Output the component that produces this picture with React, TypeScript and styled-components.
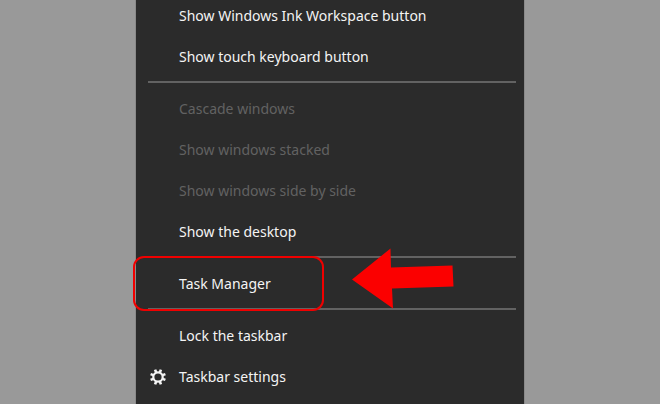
import React from "react";
import styled, { createGlobalStyle } from "styled-components";

const GlobalStyle = createGlobalStyle`
  * { box-sizing: border-box; }
  body {
    margin: 0;
    background: #999999;
    font-family: "Noto Sans", "Open Sans", sans-serif;
  }
`;

const Page = styled.main`
  display: flex;
  justify-content: center;
  min-height: 100vh;
  overflow: hidden;
`;

const Menu = styled.ul`
  flex: 0 1 388px;
  margin: -5px 0 0;
  padding: 0 0 7px;
  list-style: none;
  background: #2b2b2b;
  box-shadow: 0 0 0 1px #8a8a8a;
`;

const Item = styled.li`
  position: relative;
`;

const Command = styled.button`
  display: grid;
  grid-template-columns: 43px 1fr;
  align-items: center;
  width: 100%;
  height: 41px;
  padding: 0;
  border: 0;
  background: transparent;
  color: #f4f4f4;
  font: inherit;
  font-size: 14px;
  line-height: 20px;
  text-align: left;
  white-space: nowrap;

  &:disabled {
    color: #626262;
  }
`;

const IconSlot = styled.span`
  display: flex;
  justify-content: flex-end;
  padding-right: 13px;
`;

const Separator = styled.li`
  height: 11px;
  padding: 4px 8px 0 12px;

  &::before {
    content: "";
    display: block;
    height: 2px;
    background: #626262;
  }
`;

const Highlight = styled.span`
  position: absolute;
  top: -7px;
  left: -3px;
  width: 191px;
  height: 55px;
  border: 2px solid #f00000;
  border-radius: 11px;
  pointer-events: none;
`;

const Pointer = styled.svg`
  position: absolute;
  top: -15px;
  left: 216px;
  pointer-events: none;
`;

const Gear = () => (
  <svg width="16" height="16" viewBox="0 0 16 16" aria-hidden="true">
    <g fill="none" stroke="#f4f4f4">
      <circle cx="8" cy="8" r="4.7" strokeWidth="2.2" />
      <path
        strokeWidth="2.6"
        d="M6.1 3.4 5.1 .6M9.9 3.4 10.9 .6M6.1 12.6 5.1 15.4M9.9 12.6 10.9 15.4M3.4 6.1 .6 5.1M3.4 9.9 .6 10.9M12.6 6.1 15.4 5.1M12.6 9.9 15.4 10.9"
      />
    </g>
  </svg>
);

type Entry = {
  label: string;
  disabled?: boolean;
  marked?: boolean;
  icon?: React.ReactNode;
};

const groups: Entry[][] = [
  [
    { label: "Show Windows Ink Workspace button" },
    { label: "Show touch keyboard button" },
  ],
  [
    { label: "Cascade windows", disabled: true },
    { label: "Show windows stacked", disabled: true },
    { label: "Show windows side by side", disabled: true },
    { label: "Show the desktop" },
  ],
  [{ label: "Task Manager", marked: true }],
  [{ label: "Lock the taskbar" }, { label: "Taskbar settings", icon: <Gear /> }],
];

export default function App() {
  return (
    <Page>
      <GlobalStyle />
      <Menu aria-label="Taskbar menu">
        {groups.map((entries, index) => (
          <React.Fragment key={entries[0].label}>
            {index > 0 && <Separator role="separator" />}
            {entries.map(({ label, disabled, marked, icon }) => (
              <Item key={label}>
                <Command type="button" disabled={disabled}>
                  <IconSlot>{icon}</IconSlot>
                  <span>{label}</span>
                </Command>
                {marked && (
                  <>
                    <Highlight />
                    <Pointer width="103" height="62" viewBox="0 0 103 62" aria-hidden="true">
                      <path fill="#fb0000" d="M0 31.5 38.5 .5 39 19.5 100.5 17.5 101.5 38.5 40 40.5 41 60.5Z" />
                    </Pointer>
                  </>
                )}
              </Item>
            ))}
          </React.Fragment>
        ))}
      </Menu>
    </Page>
  );
}
